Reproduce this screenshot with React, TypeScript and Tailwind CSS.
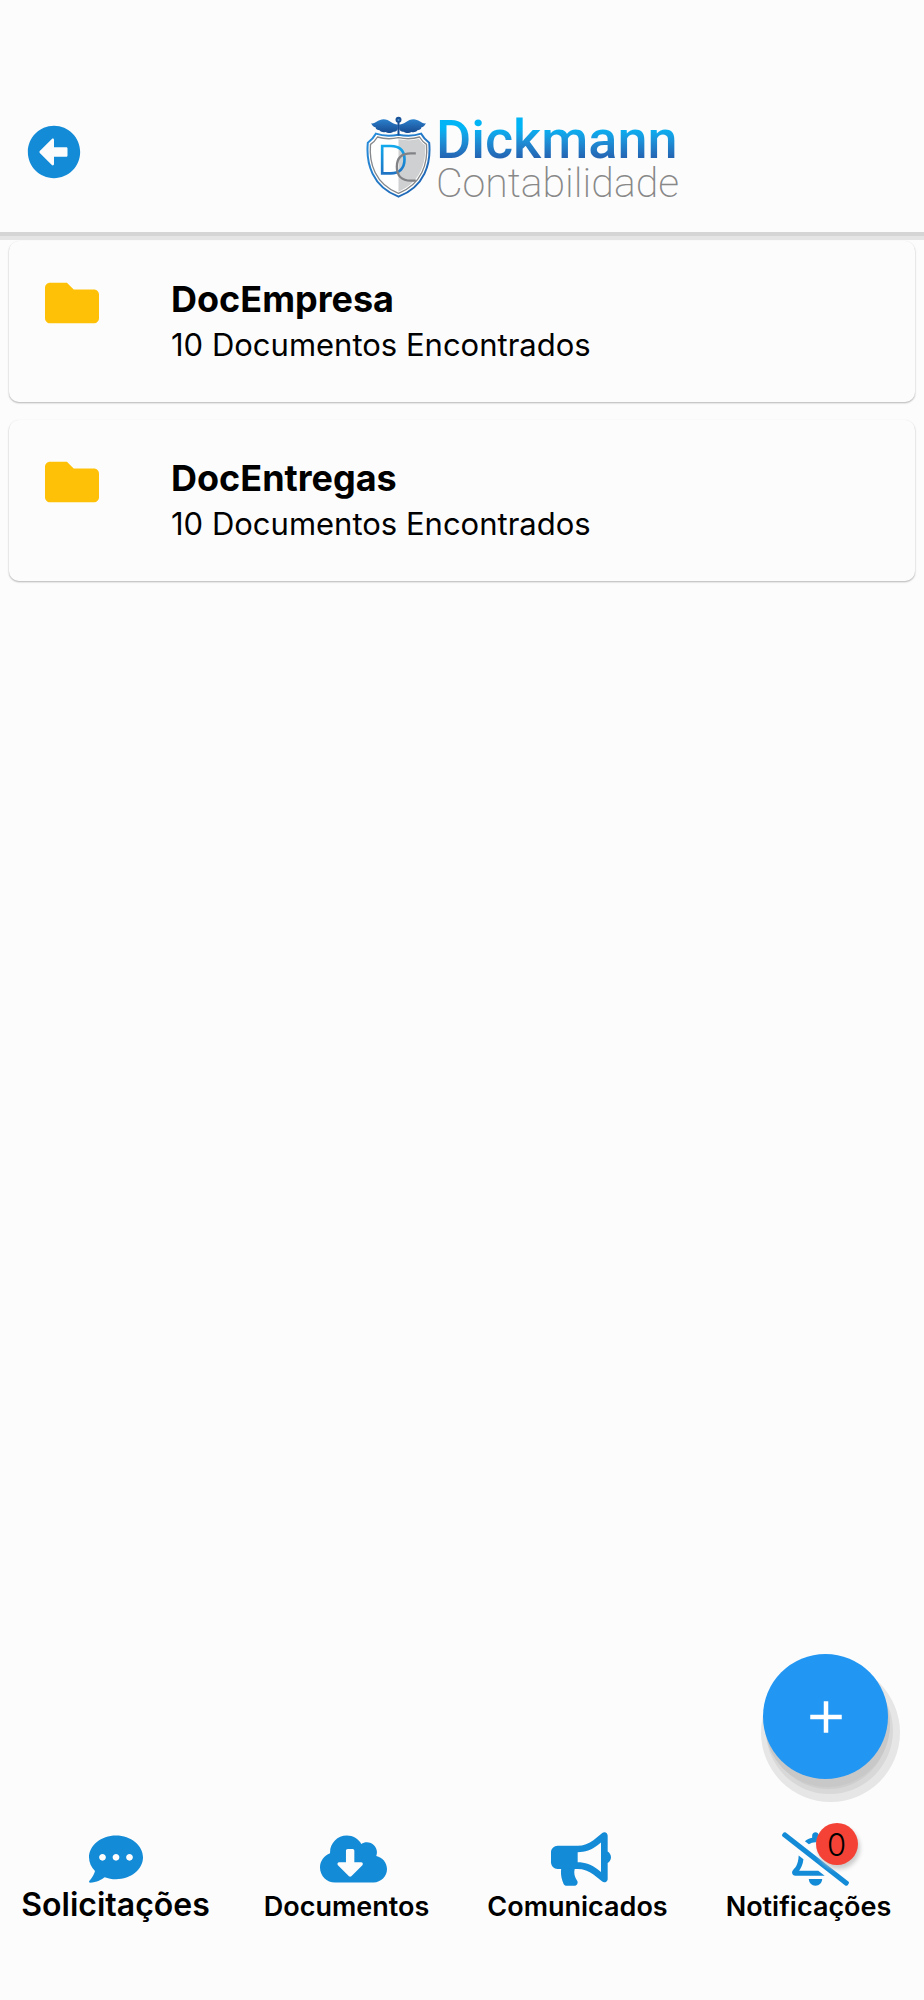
import type { IconType } from 'react-icons'
import {
  FaArrowAltCircleLeft,
  FaBullhorn,
  FaCloudDownloadAlt,
  FaCommentDots,
  FaFolder,
  FaRegBellSlash,
} from 'react-icons/fa'
import { MdAdd } from 'react-icons/md'

type Folder = { name: string; total: number }

type Tab = {
  label: string
  icon: IconType
  iconClass: string
  active?: boolean
  badge?: number
}

const folders: Folder[] = [
  { name: 'DocEmpresa', total: 10 },
  { name: 'DocEntregas', total: 10 },
]

const tabs: Tab[] = [
  { label: 'Solicitações', icon: FaCommentDots, iconClass: 'w-[54px]', active: true },
  { label: 'Documentos', icon: FaCloudDownloadAlt, iconClass: 'w-[67px]' },
  { label: 'Comunicados', icon: FaBullhorn, iconClass: 'w-[60px]' },
  { label: 'Notificações', icon: FaRegBellSlash, iconClass: 'w-[67px]', badge: 0 },
]

function Shield() {
  return (
    <svg viewBox="52 48 194 246" className="h-[82px] w-[65px]" aria-hidden="true">
      <defs>
        <linearGradient id="edge" x1="0" y1="0" x2="1" y2="1">
          <stop offset="0" stopColor="#2a8fdc" />
          <stop offset="1" stopColor="#1d5fae" />
        </linearGradient>
        <linearGradient id="letter" x1="0" y1="0" x2="0" y2="1">
          <stop offset="0" stopColor="#12a8ec" />
          <stop offset="1" stopColor="#1f74c4" />
        </linearGradient>
        <linearGradient id="wing" x1="0" y1="0" x2="0" y2="1">
          <stop offset="0" stopColor="#2b80cc" />
          <stop offset="1" stopColor="#174a8f" />
        </linearGradient>
      </defs>
      <path d="M149 104C123 109 102 108 81 101C74 114 66 121 57 128C51 190 70 260 149 290C228 260 247 190 241 128C232 121 224 114 217 101C196 108 175 109 149 104Z" fill="#fff" stroke="url(#edge)" strokeWidth="6" />
      <path d="M149 113C126 118 105 117 86 111C80 121 73 128 65 133C60 190 79 252 149 280C219 252 238 190 233 133C225 128 218 121 212 111C193 117 172 118 149 113Z" fill="#fff" stroke="#85878a" strokeWidth="4" />
      <path d="M149 118C172 122 192 121 210 116C216 125 222 131 229 135C233 188 214 248 149 275Z" fill="#cfd0d1" />
      <path d="M100 138H125C152 138 167 152 167 178C167 205 152 220 125 220H100Z" fill="none" stroke="url(#letter)" strokeWidth="8" />
      <path d="M201 160H186C156 160 144 176 144 200C144 226 158 242 186 242H201" fill="none" stroke="#808285" strokeWidth="7" />
      <path d="M147 74C131 74 122 58 104 58C88 58 80 72 67 70C70 79 76 81 80 82C81 89 87 91 92 91C97 97 104 98 110 96C117 101 128 99 134 95C140 96 145 92 147 88Z" fill="url(#wing)" />
      <path d="M151 74C167 74 176 58 194 58C210 58 218 72 231 70C228 79 222 81 218 82C217 89 211 91 206 91C201 97 194 98 188 96C181 101 170 99 164 95C158 96 153 92 151 88Z" fill="url(#wing)" />
      <circle cx="149" cy="59" r="9" fill="#1b5398" />
      <circle cx="149" cy="60" r="3" fill="#4f97d6" />
      <path d="M149 64V106" stroke="#174f96" strokeWidth="6" />
    </svg>
  )
}

function Logo() {
  return (
    <div className="flex items-start gap-[5px]">
      <Shield />
      <div className="flex flex-col font-[Roboto,sans-serif]">
        <span className="bg-linear-to-b from-[#00b4f5] from-25% to-[#2466b4] to-85% bg-clip-text text-[54px] leading-[48px] font-medium text-transparent">
          Dickmann
        </span>
        <span className="text-[41px] leading-[38px] font-extralight text-[#888]">Contabilidade</span>
      </div>
    </div>
  )
}

function Header() {
  return (
    <header className="relative z-10 flex h-[232px] items-start bg-[#fcfcfc] px-[27px] pt-[116px] shadow-[0_4px_0_#d5d5d5,0_8px_0_#e5e5e5]">
      <button type="button" aria-label="Voltar" className="mt-[9px] text-[#148bd7]">
        <FaArrowAltCircleLeft className="size-[54px]" />
      </button>
      <div className="flex flex-1 justify-center pl-[67px]">
        <Logo />
      </div>
    </header>
  )
}

function FolderCard({ folder }: { folder: Folder }) {
  return (
    <li className="rounded-[10px] bg-[#fcfcfc] shadow-[0_1px_1px_#c8c8c8,0_1px_2px_#bdbdbd]">
      <button type="button" className="flex w-full items-start gap-[72px] px-9 pt-[35px] pb-[35px] text-left">
        <FaFolder className="size-[54px] shrink-0 text-[#ffc107]" />
        <span className="flex flex-col">
          <span className="text-[36px] leading-[46px] font-bold">{folder.name}</span>
          <span className="text-[31px] leading-[45px]">{folder.total} Documentos Encontrados</span>
        </span>
      </button>
    </li>
  )
}

function TabButton({ tab }: { tab: Tab }) {
  const Icon = tab.icon
  return (
    <button type="button" className="flex flex-1 flex-col items-center">
      <span className="relative flex w-[54px] text-[#148bd7]">
        <Icon className={`h-[54px] shrink-0 ${tab.iconClass}`} />
        {tab.badge !== undefined && (
          <span className="absolute -top-[9px] left-[34px] flex size-[42px] items-center justify-center rounded-full bg-[#f44336] text-[31px] leading-none font-light text-black shadow-[2px_4px_4px_#cccccc]">
            {tab.badge}
          </span>
        )}
      </span>
      <span className={`font-semibold ${tab.active ? 'text-[32px] leading-[38px]' : 'text-[27px] leading-[42px]'}`}>
        {tab.label}
      </span>
    </button>
  )
}

export default function App() {
  return (
    <div className="flex min-h-screen flex-col bg-[#fcfcfc] font-[Inter,sans-serif] text-black">
      <Header />
      <main className="flex flex-1 flex-col">
        <ul className="flex flex-col gap-[18px] px-[9px] pt-[9px]">
          {folders.map((folder) => (
            <FolderCard key={folder.name} folder={folder} />
          ))}
        </ul>
        <button
          type="button"
          aria-label="Adicionar"
          className="mt-auto mr-9 mb-[53px] flex size-[125px] items-center justify-center self-end rounded-full bg-[#2196f3] text-white shadow-[2px_8px_0_0_#c8c8c8,3px_13px_0_-3px_#cecece,4px_14px_0_1px_#d8d8d8,5px_16px_0_7px_#e6e6e6]"
        >
          <MdAdd className="size-[54px]" />
        </button>
      </main>
      <nav className="flex items-start pb-[72px]">
        {tabs.map((tab) => (
          <TabButton key={tab.label} tab={tab} />
        ))}
      </nav>
    </div>
  )
}
